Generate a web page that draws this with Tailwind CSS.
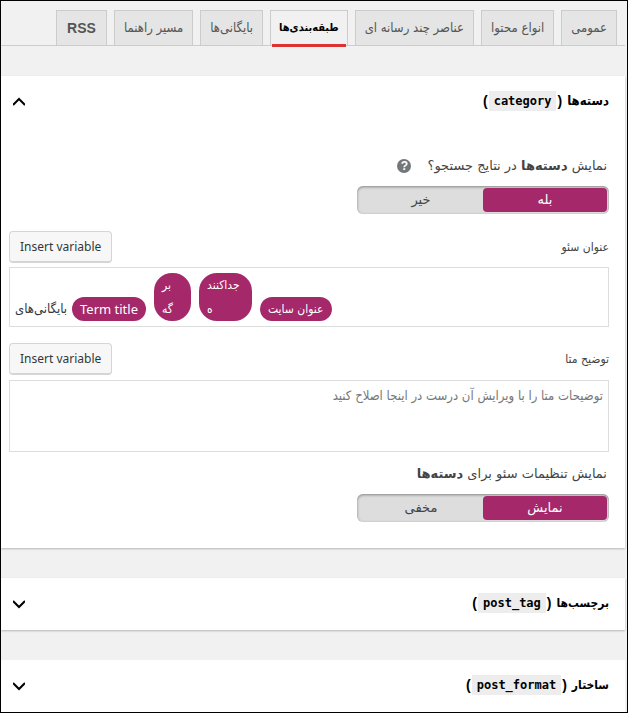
<!doctype html>
<html lang="fa" dir="rtl">
  <head>
    <meta charset="UTF-8" />
    <meta name="viewport" content="width=device-width, initial-scale=1.0" />
    <title>طبقه‌بندی‌ها</title>
    <script src="https://cdn.jsdelivr.net/npm/@tailwindcss/browser@4"></script>
  </head>
  <body class="min-h-screen border border-black bg-[#f1f1f1] pl-0 pr-[2px] font-['DejaVu_Sans',sans-serif] text-[13px] text-[#444]">

    <!-- tabs -->
    <nav class="flex gap-[7px] border-b border-[#ccc] pr-2 pt-[9px] font-['DejaVu_Sans_Condensed','DejaVu_Sans',sans-serif] text-[13px] leading-6 text-[#555]">
      <a href="#general" class="border border-b-0 border-[#ccc] bg-[#e5e5e5] px-[9px] py-[5px] whitespace-nowrap">عمومی</a>
      <a href="#types" class="border border-b-0 border-[#ccc] bg-[#e5e5e5] px-[9px] py-[5px] whitespace-nowrap">انواع محتوا</a>
      <a href="#media" class="border border-b-0 border-[#ccc] bg-[#e5e5e5] px-[9px] py-[5px] whitespace-nowrap">عناصر چند رسانه ای</a>
      <a href="#taxonomies" aria-current="page" class="relative border border-b-0 border-[#ccc] bg-[#f1f1f1] px-2 py-[5px] text-[11px] leading-6 font-bold whitespace-nowrap text-black after:absolute after:inset-x-px after:-bottom-[2px] after:h-[3px] after:bg-[#dc3232]">طبقه‌بندی‌ها</a>
      <a href="#archives" class="border border-b-0 border-[#ccc] bg-[#e5e5e5] px-[9px] py-[5px] whitespace-nowrap">بایگانی‌ها</a>
      <a href="#breadcrumbs" class="border border-b-0 border-[#ccc] bg-[#e5e5e5] px-[9px] py-[5px] whitespace-nowrap">مسیر راهنما</a>
      <a href="#rss" class="border border-b-0 border-[#ccc] bg-[#e5e5e5] px-[10px] py-[5px] font-['Liberation_Sans',sans-serif] text-sm leading-6 font-bold whitespace-nowrap">RSS</a>
    </nav>

    <main class="flex flex-col gap-[30px] pt-[30px]">

      <!-- category -->
      <section class="bg-white shadow-[0_1px_2px_rgba(0,0,0,0.25)]">
        <h2>
          <button type="button" aria-expanded="true" class="flex h-[52px] w-full items-center justify-between pr-4 pl-3 font-['Liberation_Sans','DejaVu_Sans_Condensed',sans-serif] text-sm font-bold text-black">
            <span class="flex items-center gap-px pb-[2px]"><span class="ml-1 font-['DejaVu_Sans_Condensed','DejaVu_Sans',sans-serif] text-[13px]">دسته‌ها</span><span>(</span><code dir="ltr" class="bg-[#ededed] px-[5px] font-['DejaVu_Sans_Mono',monospace] text-xs leading-5">category</code><span>)</span></span>
            <svg class="h-3 w-3" viewBox="0 0 12 12" fill="none" stroke="currentColor" stroke-width="2"><path d="M0 9 6 3l6 6" /></svg>
          </button>
        </h2>

        <div class="pt-[28px] pr-4 pb-[26px] pl-2">
          <fieldset>
            <legend class="flex items-center gap-4 pr-[2px] leading-5">
              <span>نمایش <strong>دسته‌ها</strong> در نتایج جستجو؟</span>
              <button type="button" aria-label="راهنما" class="flex h-[14px] w-[14px] items-center justify-center rounded-full bg-[#72777c] font-['Liberation_Sans',sans-serif] text-xs font-bold text-white" dir="ltr">?</button>
            </legend>
            <div class="mt-[10px] flex h-7 w-[252px] rounded-md bg-[#ddd] p-[2px] shadow-[inset_0_1px_3px_rgba(0,0,0,0.4)]">
              <label class="flex flex-1 cursor-pointer items-center justify-center rounded has-checked:bg-[#a4286a] has-checked:text-white"><input type="radio" name="show" class="sr-only" checked />بله</label>
              <label class="flex flex-1 cursor-pointer items-center justify-center rounded has-checked:bg-[#a4286a] has-checked:text-white"><input type="radio" name="show" class="sr-only" />خیر</label>
            </div>
          </fieldset>

          <div class="mt-[17px] flex items-center justify-between">
            <span id="title-label" class="font-['DejaVu_Sans_Condensed','DejaVu_Sans',sans-serif] text-xs">عنوان سئو</span>
            <button type="button" dir="ltr" class="h-8 rounded border border-b-2 border-[#d5d5d5] bg-[#f7f7f7] px-[10px] font-['Noto_Sans',sans-serif] text-xs text-[#32373c]">Insert variable</button>
          </div>
          <div contenteditable="true" role="textbox" aria-labelledby="title-label" dir="ltr" class="mt-1 flex min-h-[60px] items-end gap-2 border border-[#ddd] p-[5px] font-['DejaVu_Sans_Condensed','DejaVu_Sans',sans-serif] text-[13px] leading-6 text-[#32373c]">
            <span class="-mr-[3px]">بایگانی‌های</span>
            <span class="rounded-full bg-[#a4286a] px-2 font-['Noto_Sans',sans-serif] text-white">Term title</span>
            <span class="w-[37px] rounded-[18px] bg-[#a4286a] px-2 text-xs leading-6 text-white">بر<br />گه</span>
            <span class="w-[53px] rounded-[18px] bg-[#a4286a] px-2 text-xs leading-6 text-white">جداکنند<br />ه</span>
            <span class="rounded-full bg-[#a4286a] px-2 text-xs leading-6 text-white">عنوان سایت</span>
          </div>

          <div class="mt-4 flex items-center justify-between">
            <label for="meta" class="font-['DejaVu_Sans_Condensed','DejaVu_Sans',sans-serif] text-xs">توضیح متا</label>
            <button type="button" dir="ltr" class="h-8 rounded border border-b-2 border-[#d5d5d5] bg-[#f7f7f7] px-[10px] font-['Noto_Sans',sans-serif] text-xs text-[#32373c]">Insert variable</button>
          </div>
          <textarea id="meta" placeholder="توضیحات متا را با ویرایش آن درست در اینجا اصلاح کنید" class="mt-[5px] block h-[72px] w-full resize-none border border-[#ddd] px-[5px] py-[3px] font-['DejaVu_Sans_Condensed','DejaVu_Sans',sans-serif] text-[13px] leading-6 placeholder:text-[#777]"></textarea>

          <fieldset class="mt-3">
            <legend class="pr-[2px] leading-5">نمایش تنظیمات سئو برای <strong>دسته‌ها</strong></legend>
            <div class="mt-[10px] flex h-7 w-[252px] rounded-md bg-[#ddd] p-[2px] shadow-[inset_0_1px_3px_rgba(0,0,0,0.4)]">
              <label class="flex flex-1 cursor-pointer items-center justify-center rounded has-checked:bg-[#a4286a] has-checked:text-white"><input type="radio" name="box" class="sr-only" checked />نمایش</label>
              <label class="flex flex-1 cursor-pointer items-center justify-center rounded has-checked:bg-[#a4286a] has-checked:text-white"><input type="radio" name="box" class="sr-only" />مخفی</label>
            </div>
          </fieldset>
        </div>
      </section>

      <!-- post_tag -->
      <section class="bg-white shadow-[0_1px_2px_rgba(0,0,0,0.25)]">
        <h2>
          <button type="button" aria-expanded="false" class="flex h-[52px] w-full items-center justify-between pr-4 pl-3 font-['Liberation_Sans','DejaVu_Sans_Condensed',sans-serif] text-sm font-bold text-black">
            <span class="flex items-center gap-px pb-[2px]"><span class="ml-1 font-['DejaVu_Sans_Condensed','DejaVu_Sans',sans-serif] text-xs">برچسب‌ها</span><span>(</span><code dir="ltr" class="bg-[#ededed] px-[5px] font-['DejaVu_Sans_Mono',monospace] text-xs leading-5">post_tag</code><span>)</span></span>
            <svg class="h-3 w-3" viewBox="0 0 12 12" fill="none" stroke="currentColor" stroke-width="2"><path d="M0 3l6 6 6-6" /></svg>
          </button>
        </h2>
      </section>

      <!-- post_format -->
      <section class="bg-white">
        <h2>
          <button type="button" aria-expanded="false" class="flex h-[52px] w-full items-center justify-between pr-4 pl-3 font-['Liberation_Sans','DejaVu_Sans_Condensed',sans-serif] text-sm font-bold text-black">
            <span class="flex items-center gap-px pb-[2px]"><span class="ml-1 font-['DejaVu_Sans_Condensed','DejaVu_Sans',sans-serif] text-xs">ساختار</span><span>(</span><code dir="ltr" class="bg-[#ededed] px-[5px] font-['DejaVu_Sans_Mono',monospace] text-xs leading-5">post_format</code><span>)</span></span>
            <svg class="h-3 w-3" viewBox="0 0 12 12" fill="none" stroke="currentColor" stroke-width="2"><path d="M0 3l6 6 6-6" /></svg>
          </button>
        </h2>
      </section>

    </main>
  </body>
</html>
